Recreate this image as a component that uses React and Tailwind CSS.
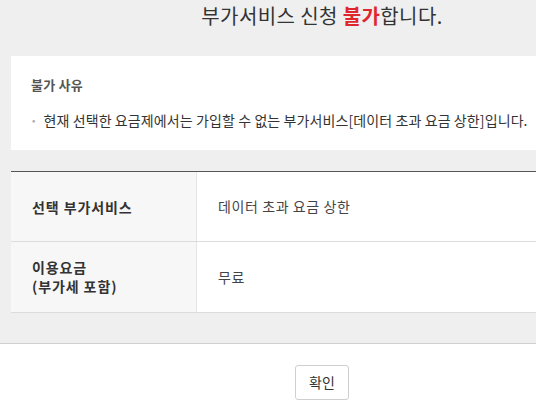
export default function App() {
  const font = { fontFamily: '"Noto Sans CJK KR", "Noto Sans", sans-serif' };
  return (
    <div className="w-[536px] h-[404px] overflow-hidden bg-white" style={font}>
      <div className="w-[644px] bg-[#efefef] px-[11px] pb-[30px] border-b border-[#cfcfcf]">
        <div className="h-[56px] flex justify-center items-start">
          <h1 className="text-[20px] leading-[32px] text-[#333] tracking-[0.4px]">
            부가서비스 신청 <span className="text-[#e0262d] font-bold">불가</span>합니다.
          </h1>
        </div>
        <div className="bg-white h-[94px] pl-[20px] pt-[19px]">
          <div className="text-[13px] font-bold text-[#555] leading-[20px] tracking-[0.2px]">불가 사유</div>
          <div className="flex items-center mt-[15px] text-[14px] text-[#333] leading-[20px] tracking-[0.1px]">
            <span className="text-[#aaa] text-[10px] ml-[1px] mr-[8px]">•</span>
            <span>현재 선택한 요금제에서는 가입할 수 없는 부가서비스[데이터 초과 요금 상한]입니다.</span>
          </div>
        </div>
        <div className="mt-[21px] border-t border-[#555] border-b border-b-[#dcdcdc] bg-white">
          <div className="flex h-[70px] border-b border-[#dcdcdc]">
            <div className="w-[186px] bg-[#f7f7f7] border-r border-[#e6e6e6] flex items-center pl-[21px] text-[14px] font-bold text-[#333] leading-[18px] tracking-[0.9px]">
              선택 부가서비스
            </div>
            <div className="flex items-center pl-[21px] text-[14px] text-[#444] tracking-[0.6px]">데이터 초과 요금 상한</div>
          </div>
          <div className="flex h-[70px]">
            <div className="w-[186px] bg-[#f7f7f7] border-r border-[#e6e6e6] flex flex-col justify-center pl-[21px] text-[14px] font-bold text-[#333] leading-[19px] tracking-[0.9px]">
              <span>이용요금</span>
              <span>(부가세 포함)</span>
            </div>
            <div className="flex items-center pl-[21px] text-[14px] text-[#444] tracking-[0.6px]">무료</div>
          </div>
        </div>
      </div>
      <div className="w-[644px] flex justify-center pt-[21px]">
        <button className="w-[54px] h-[35px] border border-[#cfcfcf] rounded-[3px] bg-white text-[14px] text-[#333]">
          확인
        </button>
      </div>
    </div>
  );
}
